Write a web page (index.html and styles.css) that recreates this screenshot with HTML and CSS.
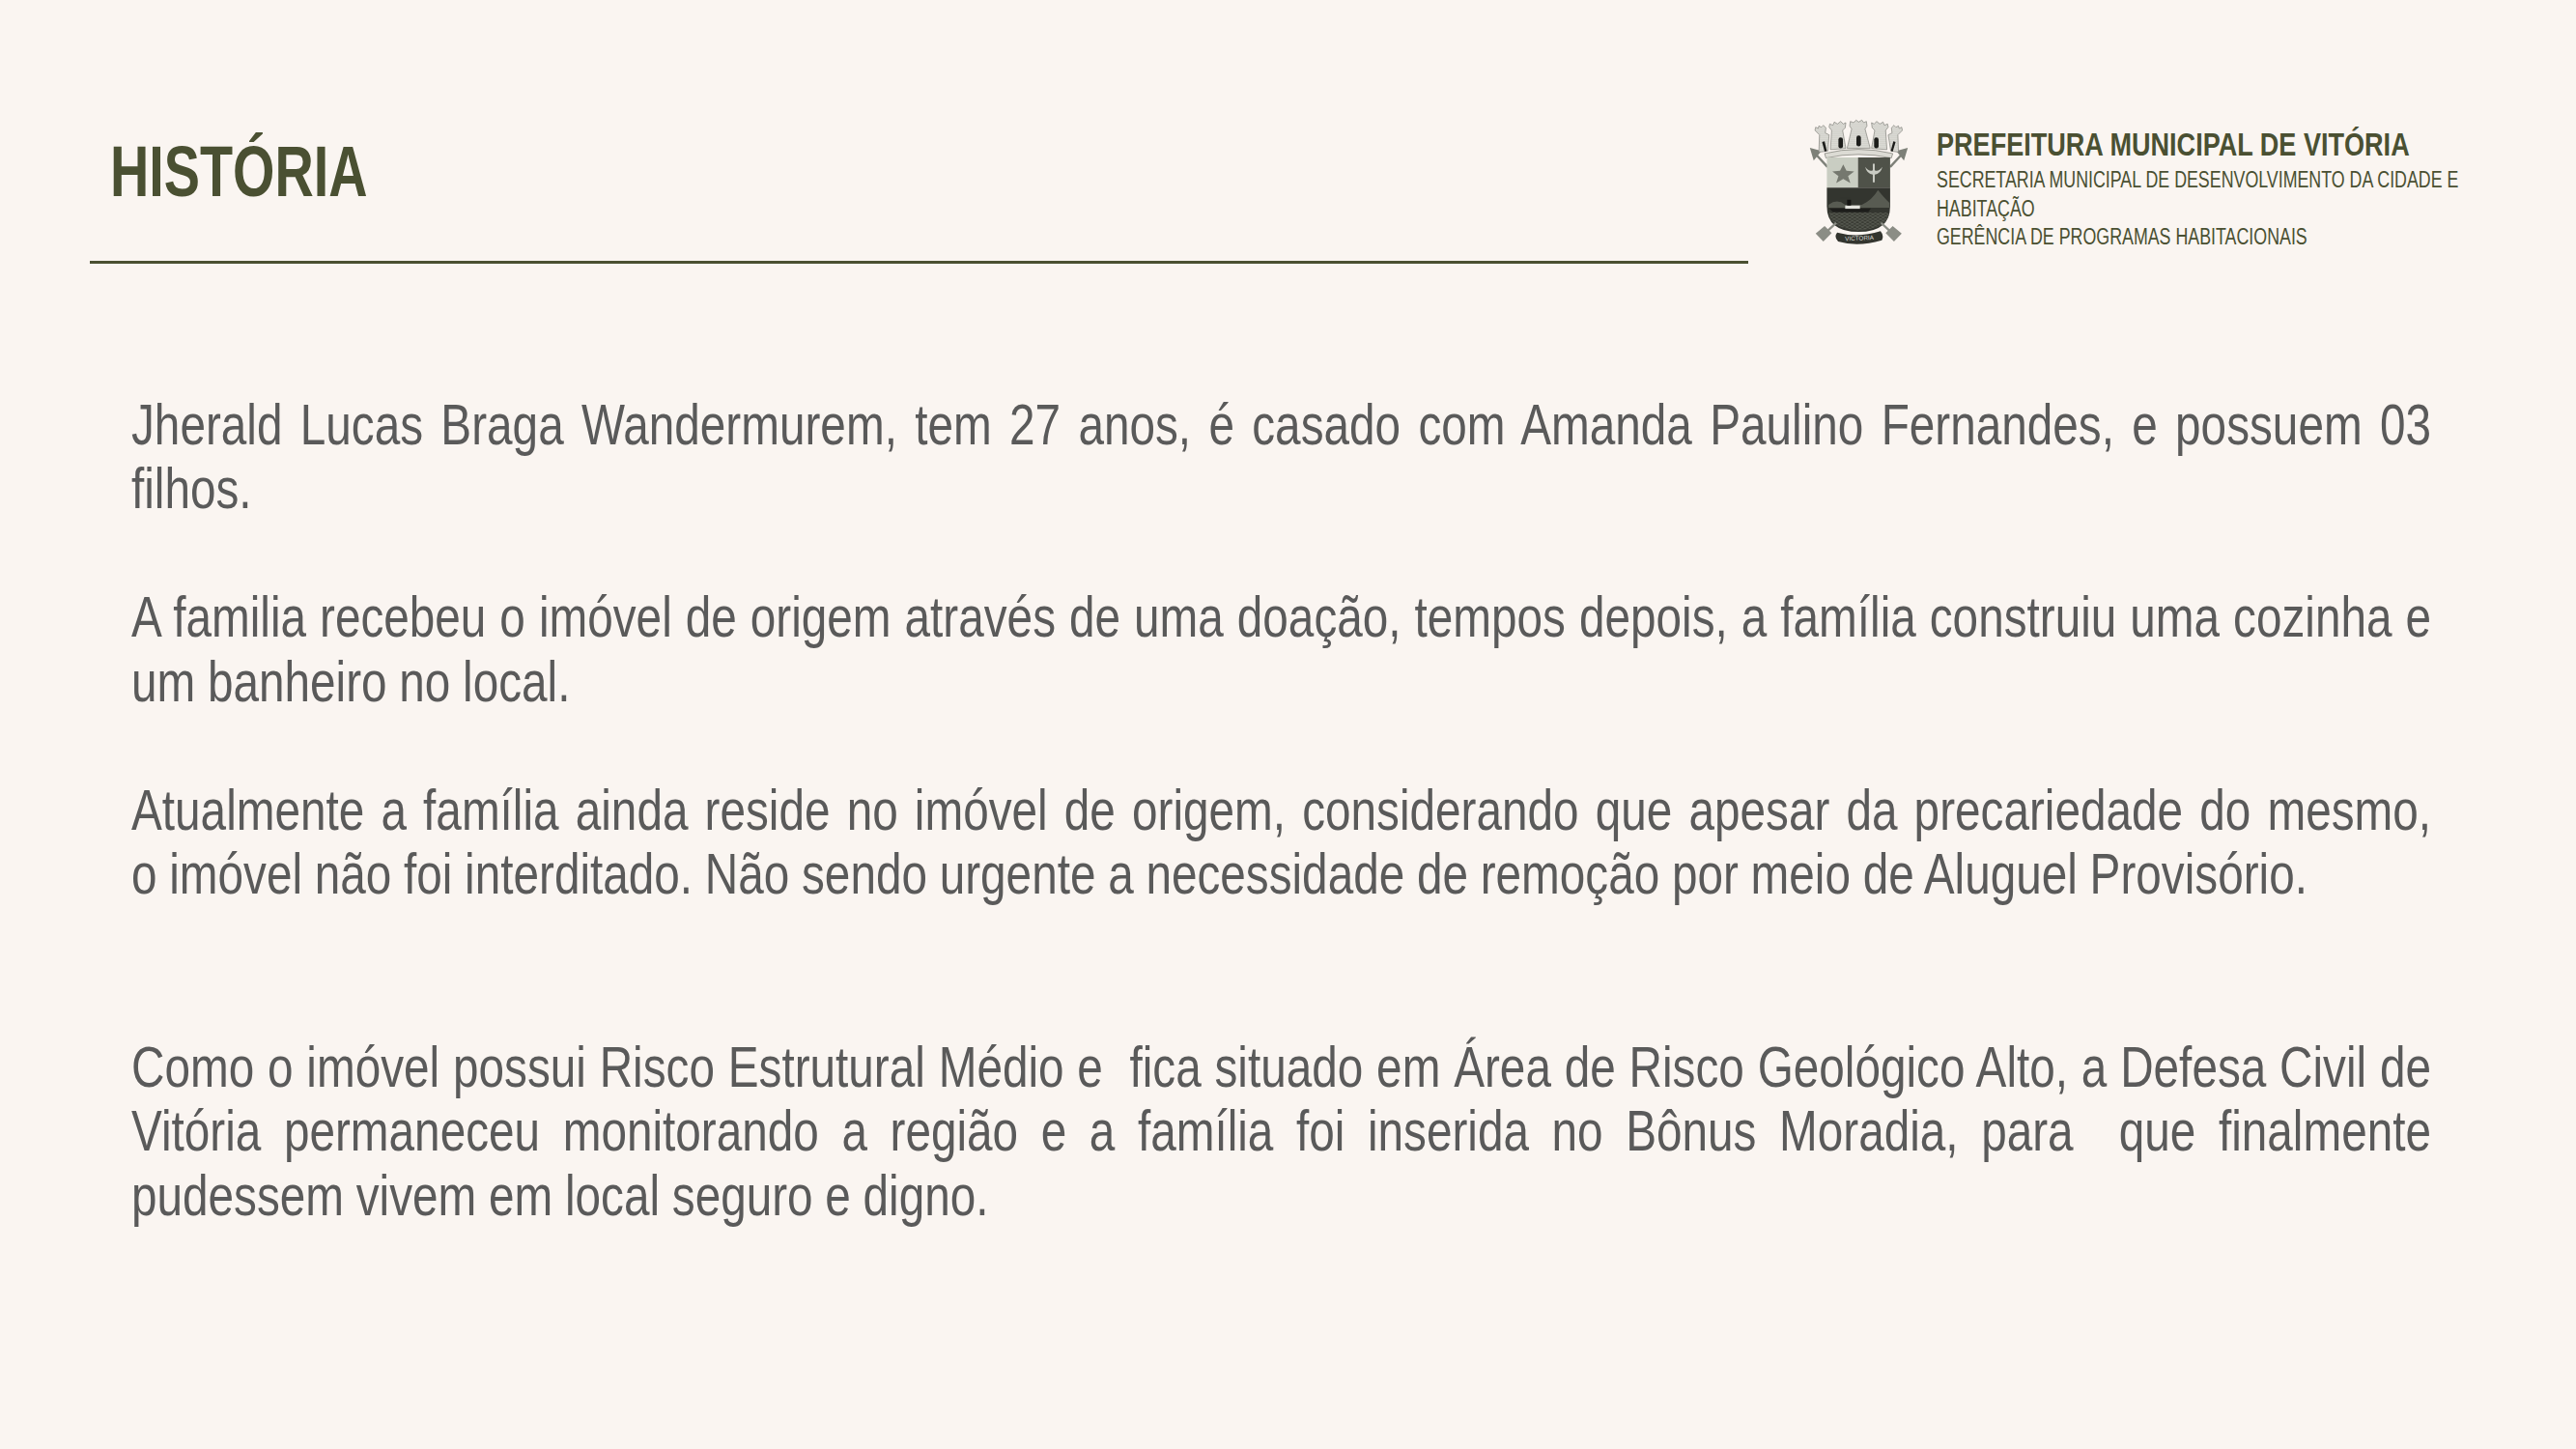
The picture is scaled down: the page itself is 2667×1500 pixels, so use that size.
FILE: index.html
```html
<!DOCTYPE html>
<html lang="pt-BR">
<head>
<meta charset="utf-8">
<title>História</title>
<link rel="stylesheet" href="styles.css">
</head>
<body>
<div class="slide">
  <header class="header">
    <div class="title-wrap"><h1 class="title">HISTÓRIA</h1></div>
    <div class="brand">
      <svg class="crest" viewBox="95 65 315 400" aria-hidden="true">
        <defs>
          <pattern id="stone" width="6" height="6" patternUnits="userSpaceOnUse"><rect width="6" height="6" fill="#e6e5e0"/><path d="M0 0H6M3 0V3M0 3H6" stroke="#a3a39c" stroke-width=".8"/></pattern>
          <pattern id="waves" width="16" height="10" patternUnits="userSpaceOnUse"><rect width="16" height="10" fill="#55584f"/><path d="M0 5Q8 -3 16 5M-8 10Q0 2 8 10 16 2 24 10" fill="none" stroke="#24251f" stroke-width="1.6"/></pattern>
        </defs>
        <g stroke="#7d8078" stroke-width="7" fill="none"><path d="M155 218 120 180M350 218 385 180"/></g>
        <path d="M100 158 136 168 112 198Z M405 158 369 168 393 198Z" fill="#7d8078"/>
        <g fill="url(#stone)" stroke="#7f7f78" stroke-width="2">
          <path d="M128 172 130 118 116 104 118 94 126 98 128 90 136 94 142 88 150 96 148 112 160 118 156 168Z"/>
          <path d="M352 168 344 118 356 112 354 96 362 88 368 94 376 90 378 98 386 94 388 104 374 118 376 172Z"/>
          <path d="M164 164 168 104 160 94 162 84 172 88 176 78 186 84 196 76 204 84 212 80 210 96 202 104 212 160Z"/>
          <path d="M292 160 302 104 294 96 292 80 300 84 308 76 318 84 328 78 332 88 342 84 344 94 336 104 340 164Z"/>
          <path d="M216 160 230 100 224 90 226 76 236 80 244 72 252 78 262 72 268 80 276 76 278 90 272 100 288 160Z"/>
        </g>
        <g fill="#1d1d1b"><rect x="189" y="126" width="14" height="34" rx="7"/><rect x="245" y="120" width="14" height="34" rx="7"/><rect x="300" y="126" width="14" height="34" rx="7"/><path d="M138 140 146 138 153 168 146 170Z M352 168 360 138 367 140 358 170Z"/></g>
        <path d="M146 176Q250 150 358 176L354 190Q250 168 150 190Z" fill="#dcdbd4" stroke="#77776f" stroke-width="2"/>
        <path d="M153 188H250V282H153Z" fill="#c9cdc2"/>
        <path d="M250 188H350V282H250Z" fill="#4f5249"/>
        <path d="M204 210 214 230 238 232 219 246 226 268 204 255 182 268 189 246 170 232 194 230Z" fill="#75786f"/>
        <path d="M272 218Q285 234 296 228V208H302V228Q313 234 326 218 320 240 302 242V266H296V242Q278 240 272 218Z" fill="#c9cbc3"/>
        <path d="M153 282H350V340Q350 420 252 420 153 420 153 340Z" fill="#33352f"/>
        <path d="M158 336Q185 315 210 336H262Q295 320 312 290 332 315 348 330V345H158Z" fill="#585b52"/>
        <path d="M160 347H290L282 358H172Z" fill="#1d1d1b"/>
        <rect x="210" y="338" width="46" height="10" fill="#e4e4de"/>
        <rect x="216" y="320" width="12" height="18" fill="#151513"/>
        <path d="M195 316H225" stroke="#33352f" stroke-width="3"/>
        <path d="M160 360H346Q346 408 252 416 160 408 160 360Z" fill="url(#waves)"/>
        <g stroke="#8b8d85" stroke-width="7" fill="none"><path d="M182 392 150 422M322 392 354 422"/></g>
        <path d="M118 425 146 402 168 424 142 450Z M386 425 358 402 336 424 362 450Z" fill="#8b8d85"/>
        <path d="M185 422Q250 440 320 418 332 432 324 446 250 468 188 450 174 436 185 422Z" fill="#33352f"/>
        <text class="crest-label" x="254" y="446" text-anchor="middle" transform="rotate(-2 254 440)">VICTORIA</text>
      </svg>
      <div class="brand-text">
        <div class="org">PREFEITURA MUNICIPAL DE VITÓRIA</div>
        <div class="dept">SECRETARIA MUNICIPAL DE DESENVOLVIMENTO DA CIDADE E<br>HABITAÇÃO<br>GERÊNCIA DE PROGRAMAS HABITACIONAIS</div>
      </div>
    </div>
  </header>
  <main class="content">
    <p class="para">Jherald Lucas Braga Wandermurem, tem 27 anos, é casado com Amanda Paulino Fernandes, e possuem 03 filhos.</p>
    <p class="para">A familia recebeu o imóvel de origem através de uma doação, tempos depois, a família construiu uma cozinha e um banheiro no local.</p>
    <p class="para para-wide">Atualmente a família ainda reside no imóvel de origem, considerando que apesar da precariedade do mesmo, o&nbsp;imóvel não foi interditado. Não sendo urgente a necessidade de remoção por meio de Aluguel Provisório.</p>
    <p class="para">Como o imóvel possui Risco Estrutural Médio e &nbsp;fica situado em Área de Risco Geológico Alto, a Defesa Civil de Vitória permaneceu monitorando a região e a família foi inserida no Bônus Moradia, para &nbsp;que finalmente pudessem vivem em local seguro e digno.</p>
  </main>
</div>
</body>
</html>
```
FILE: styles.css
```css
* { box-sizing: border-box; }
html, body { margin: 0; padding: 0; }
body { background: #faf5f1; font-family: "Liberation Sans", Arial, sans-serif; }
.slide { width: 2667px; height: 1500px; overflow: hidden; padding: 118px 113px 0 93px; background: #faf5f1; }
.header { display: flex; align-items: flex-start; }
.title-wrap { width: 1717px; height: 155px; border-bottom: 3px solid #4a5032; padding: 18px 0 0 21px; flex: none; }
.title { margin: 0; font-size: 74px; line-height: 84px; font-weight: 700; color: #4a5032; transform: scaleX(0.754); transform-origin: left top; }
.brand { display: flex; align-items: flex-start; margin-left: 62px; }
.crest { width: 105px; height: 133px; flex: none; margin-top: 4px; }
.crest-label { font-size: 19px; fill: #d8d8d2; font-family: "Liberation Sans", sans-serif; }
.brand-text { margin-left: 28px; padding-top: 11px; color: #4a5032; white-space: nowrap; }
.org { font-size: 34px; line-height: 40px; font-weight: 700; transform: scaleX(0.796); transform-origin: left top; }
.dept { font-size: 23.5px; line-height: 29.5px; margin-top: 3px; transform: scaleX(0.758); transform-origin: left top; }
.content { margin: 133.5px 0 0 43px; width: 2995px; color: #5a5a5a; font-size: 60px; line-height: 66.5px; text-align: justify; word-spacing: -0.7px; transform: scaleX(0.795); transform-origin: left top; }
.para { margin: 0 0 66.5px; }
.para-wide { margin-bottom: 133px; }
```
